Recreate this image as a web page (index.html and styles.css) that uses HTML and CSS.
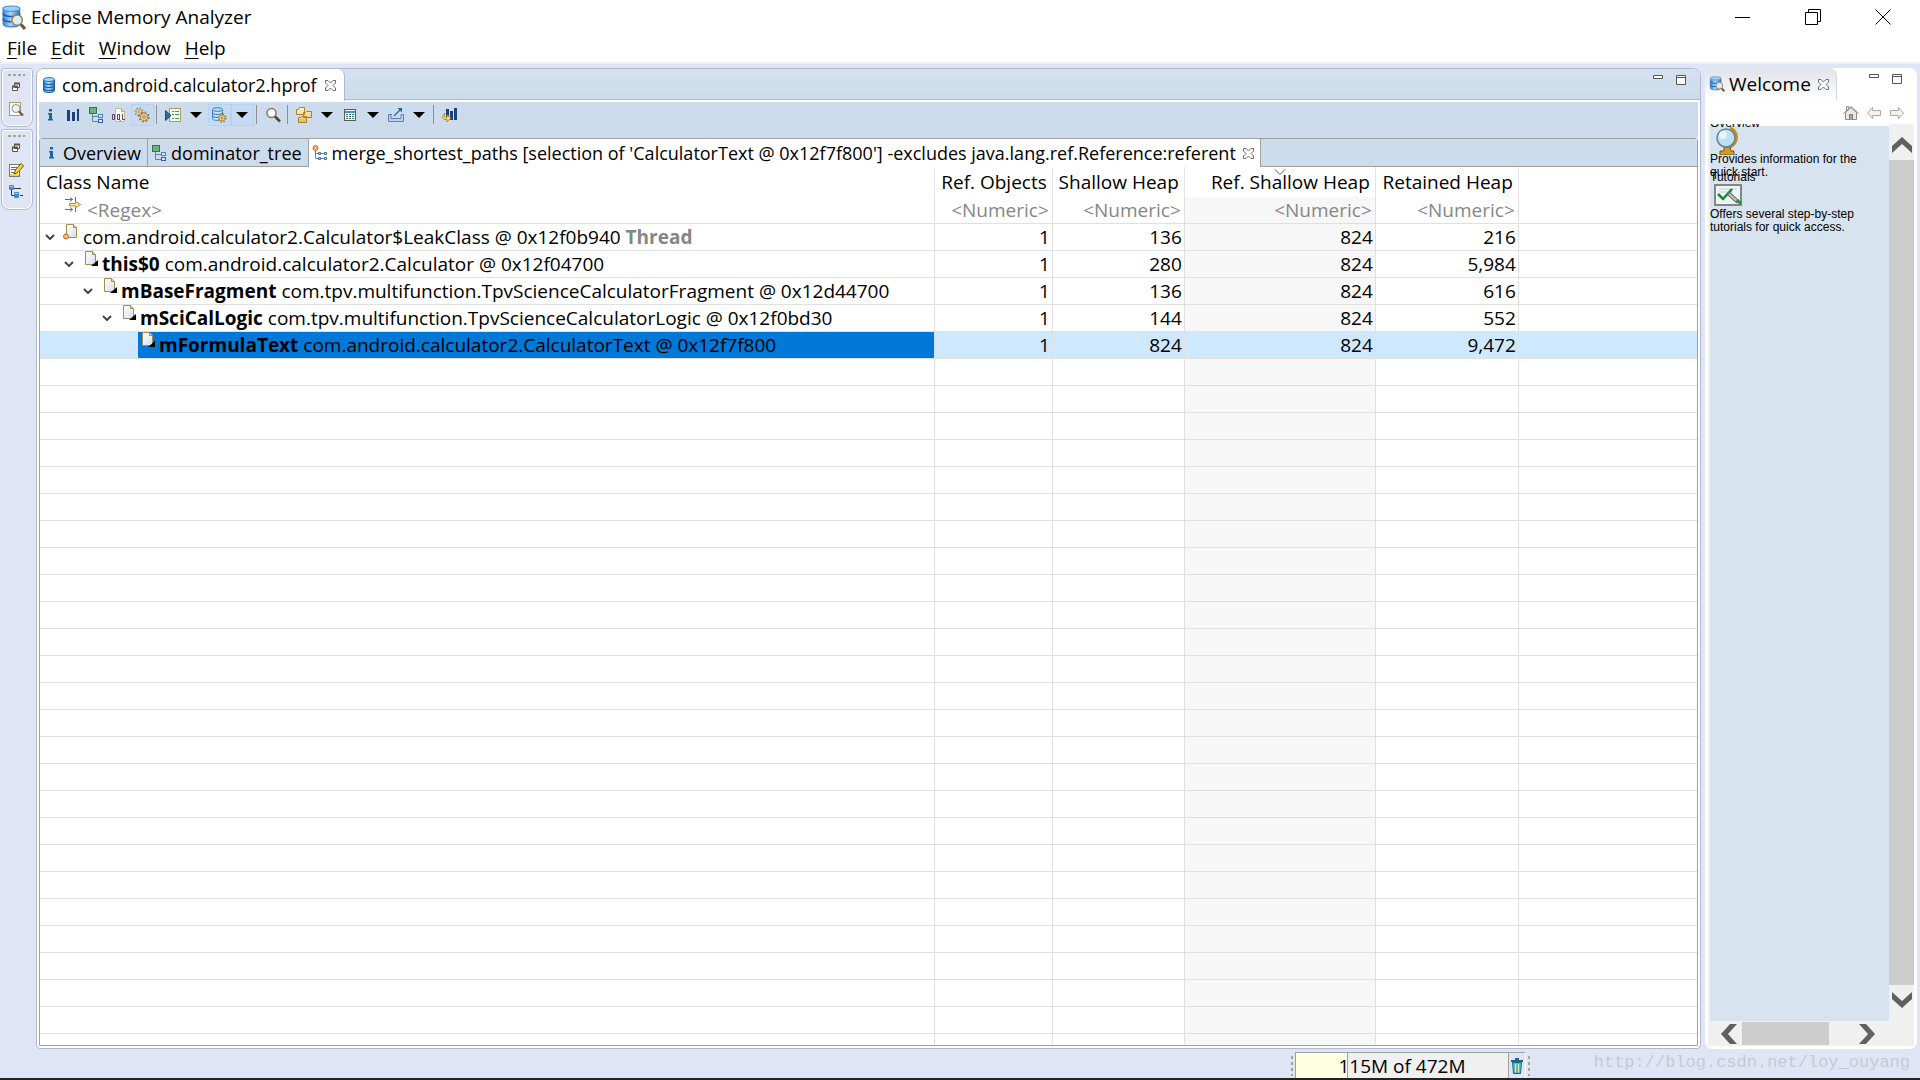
FILE: index.html
```
<!DOCTYPE html>
<html lang="en">
<head>
    <meta charset="UTF-8">
    <meta name="viewport" content="width=device-width, initial-scale=1.0">
    <title>Eclipse Memory Analyzer</title>
    <link rel="stylesheet" href="styles.css">
</head>
<body>
    <!-- Icon definitions -->
    <svg class="defs" aria-hidden="true">
        <defs>
            <linearGradient id="blue" x1="0" x2="1" y1="0" y2="0">
                <stop offset="0" stop-color="#2f86dc"/><stop offset=".45" stop-color="#a8d8f8"/><stop offset="1" stop-color="#2a72c8"/>
            </linearGradient>
            <linearGradient id="page" x1="0" x2="1" y1="0" y2="1">
                <stop offset="0" stop-color="#fff"/><stop offset="1" stop-color="#d3e0f2"/>
            </linearGradient>
            <linearGradient id="gold" x1="0" x2="0" y1="0" y2="1">
                <stop offset="0" stop-color="#fff6cf"/><stop offset="1" stop-color="#e6bd58"/>
            </linearGradient>
        </defs>
        <symbol id="db" viewBox="0 0 16 16">
            <path d="M2.500 2.500v11c0 1.300 2.500 2 5.500 2s5.500-.7 5.500-2v-11z" fill="url(#blue)" stroke="#1b5fae"/>
            <ellipse cx="8" cy="2.500" rx="5.500" ry="2" fill="#a4d6f4" stroke="#2b7cc8"/>
            <path d="M2.500 5.500c0 1.300 2.500 2 5.500 2s5.500-.7 5.500-2M2.500 8.500c0 1.300 2.500 2 5.500 2s5.500-.7 5.500-2M2.500 11.500c0 1.300 2.500 2 5.500 2s5.500-.7 5.500-2" fill="none" stroke="#1551a4"/>
        </symbol>
        <symbol id="mat" viewBox="0 0 24 24">
            <path d="M2 3v15c0 2 3 3 8 3s8-1 8-3V3z" fill="url(#blue)" stroke="#3c78c0"/>
            <ellipse cx="10" cy="3.500" rx="8" ry="2.500" fill="#9bd0f2" stroke="#4a8fce"/>
            <path d="M2 8c0 2 3 3 8 3s8-1 8-3M2 13c0 2 3 3 8 3" fill="none" stroke="#1d5db0" stroke-width="1.500"/>
            <circle cx="15.500" cy="14.500" r="5" fill="#dceefa" stroke="#9c8763" stroke-width="1.500"/>
            <path d="M19 18.500l4 4.500" stroke="#6b5744" stroke-width="3"/>
        </symbol>
        <symbol id="info" viewBox="0 0 16 16">
            <path d="M7 2h3v2.500H7zM6 6h4v6h1v1.500H6V12h1V7.500H6z" fill="#1a66a8"/>
        </symbol>
        <symbol id="bars" viewBox="0 0 16 16">
            <path d="M2 3h3v11H2zM7 5h3v9H7zM12 2h2v12h-2z" fill="#1d4379"/>
        </symbol>
        <symbol id="domtree" viewBox="0 0 16 16">
            <path d="M4.500 7v7.500H10M4.500 9.500H10" fill="none" stroke="#66809c"/>
            <rect x="1.500" y=".5" width="7" height="6" fill="#6cb37c" stroke="#2b7a45"/>
            <rect x="10.500" y="7.500" width="4" height="3" fill="#cfeafc" stroke="#4a7fc0"/>
            <rect x="10.500" y="12.500" width="4" height="3" fill="#cfeafc" stroke="#2c62b0"/>
        </symbol>
        <symbol id="oql" viewBox="0 0 16 16">
            <path d="M4.500 1.500h6l3 3v10h-9z" fill="#fdfaf0" stroke="#c9b98c"/>
            <path d="M10.500 1.500v3h3" fill="#ecd590" stroke="#c9a85c"/>
            <path d="M1.500 7.500h2v5h-2zM6.500 7.500h2v5h-2zM8 12l1.500 2M11.500 7v5.500H14" fill="none" stroke="#5a3f78"/>
        </symbol>
        <symbol id="gear" viewBox="0 0 16 16">
            <circle cx="8" cy="8" r="6" fill="none" stroke="#a87636" stroke-width="3" stroke-dasharray="2.400 2.300"/>
            <circle cx="8" cy="8" r="4.600" fill="#fae3ad" stroke="#bc8840" stroke-width="1.500"/>
            <circle cx="8" cy="8" r="1.800" fill="#fff" stroke="#8b5b23" stroke-width="1.200"/>
        </symbol>
        <symbol id="gears" viewBox="0 0 16 16">
            <use href="#gear" x="0" y="0" width="10" height="10" opacity=".7"/>
            <use href="#gear" x="4" y="4" width="12" height="12"/>
        </symbol>
        <symbol id="query" viewBox="0 0 16 16">
            <rect x="4.500" y="1.500" width="11" height="13" fill="#f4faee" stroke="#ab9a62"/>
            <path d="M7 4.500h2M10 4.500h4M7 7.500h2M10 7.500h4M7 11.500h2M10 11.500h4" stroke="#3f9a5e"/>
            <path d="M.5 3.500L6 8.500l-5.500 5z" fill="#2e7090" stroke="#174c72"/>
        </symbol>
        <symbol id="dbgear" viewBox="0 0 16 16">
            <path d="M1.500 2.500v9c0 1.300 2 2 5 2s5-.7 5-2v-9z" fill="#c4e4f8" stroke="#3f86c8"/>
            <ellipse cx="6.500" cy="2.500" rx="5" ry="2" fill="#a4d4f2" stroke="#3f86c8"/>
            <path d="M1.500 5.500c0 1.300 2 2 5 2s5-.7 5-2M1.500 8.500c0 1.300 2 2 5 2" fill="none" stroke="#2b6cb8"/>
            <use href="#gear" x="6" y="6" width="10" height="10"/>
        </symbol>
        <symbol id="down" viewBox="0 0 12 6"><path d="M0 0h12L6 6z"/></symbol>
        <symbol id="search" viewBox="0 0 16 16">
            <circle cx="6.500" cy="6" r="4.500" fill="#f8fcff" stroke="#8a765d" stroke-width="1.500"/>
            <path d="M10 9.500l5 5" stroke="#55402e" stroke-width="2.500"/>
        </symbol>
        <symbol id="groups" viewBox="0 0 16 16">
            <path d="M.5 2.500h2l1-2h5v7h-8zM7.500 5.500h2l1-1h5v6h-8zM2.500 10.500h2l1-1h5v6h-8z" fill="url(#gold)" stroke="#ad8124"/>
        </symbol>
        <symbol id="calc" viewBox="0 0 16 16">
            <rect x="2.500" y="2.500" width="11" height="11" fill="#f7f7ee" stroke="#5d5b4a"/>
            <path d="M3 4h10v2H3z" fill="#4d92b0"/>
            <path d="M4 7.500h8M4 9.500h8M4 11.500h8" stroke="#2b7191" stroke-dasharray="2 1"/>
        </symbol>
        <symbol id="export" viewBox="0 0 16 16">
            <path d="M4 7.500H.5v7h15v-7H13v4H3V7.500" fill="#bdd0ef" stroke="#5f7fb9"/>
            <path d="M6 9l6-6" stroke="#2d6ba4" stroke-width="1.300"/>
            <path d="M9.500 1H14v4.500z" fill="#1f6399"/>
        </symbol>
        <symbol id="compare" viewBox="0 0 16 16">
            <path d="M4 2h3v8H4zM8 4h3v9H8zM12 1h3v12h-3z" fill="#1d4379"/>
            <path d="M3 6C.5 7.500 0 11 2 12.500h3V15l4-4-4-3v2.500H3.500C2 9.500 2.500 7.500 3 6z" fill="#f8d868" stroke="#b17b18" stroke-width=".8"/>
        </symbol>
        <symbol id="paths" viewBox="0 0 16 16">
            <path d="M3.500 6v7.500H14M3.500 8.500H14" fill="none" stroke="#5a7cb8"/>
            <circle cx="3.500" cy="3" r="2.500" fill="#f9b872" stroke="#c96a1c"/>
            <path d="M6.500 7.500h2v2h-2zM12.500 7.500h2v2h-2zM6.500 12.500h2v2h-2zM12.500 12.500h2v2h-2z" fill="#dbe8fb" stroke="#4468ae"/>
        </symbol>
        <symbol id="close" viewBox="0 0 11 11">
            <path d="M.5.5h2.500l2.500 2.500L8 .5h2.500V3L8 5.500 10.500 8v2.500H8L5.500 8 3 10.500H.5V8L3 5.500.5 3z" fill="#fff" stroke="#6a6a6a"/>
        </symbol>
        <symbol id="minimize" viewBox="0 0 10 10"><path d="M.5.500h9v3h-9z" fill="#fff" stroke="#555"/></symbol>
        <symbol id="maximize" viewBox="0 0 10 10"><path d="M.5.500h9v9h-9zM.5 2.500h9" fill="#fff" stroke="#555"/></symbol>
        <symbol id="restore" viewBox="0 0 10 10">
            <path d="M3.500 1.500h5v4h-5zM1.500 4.500h5v4h-5z" fill="#fff" stroke="#5d5348"/>
            <path d="M3 1.500h6M1 4.500h6" stroke="#5d5348" stroke-width="2"/>
        </symbol>
        <symbol id="inspect" viewBox="0 0 16 16">
            <rect x="1.500" y="1.500" width="11" height="13" fill="#fbfcf6" stroke="#a89c72"/>
            <circle cx="8" cy="7.500" r="4" fill="#eaf3fb" stroke="#8d8d85"/>
            <path d="M11 10.500l4 4" stroke="#6d5038" stroke-width="2"/>
        </symbol>
        <symbol id="notes" viewBox="0 0 16 16">
            <rect x="1.500" y="2.500" width="10" height="12" fill="#fff" stroke="#777"/>
            <path d="M3 5.500h6M3 7.500h5M3 10.500h3" stroke="#4778a4"/>
            <path d="M2 12h9v2H2z" fill="#f4d72c"/>
            <path d="M6 12l1.500-4L13 1.500 15.500 4 10 10.500z" fill="#f7d916" stroke="#3b3510" stroke-width=".8"/>
        </symbol>
        <symbol id="nav" viewBox="0 0 16 16">
            <path d="M6 4.500h7M3.500 5v6.500H6M12 11.500h3" fill="none" stroke="#333"/>
            <rect x="1" y="1" width="5" height="5" rx="1" fill="#3a8ad8"/>
            <rect x="6" y="8" width="5" height="6" rx="1" fill="#3a8ad8"/>
            <path d="M2 2.500h3M7 9.500h3" stroke="#a9d4f6"/>
        </symbol>
        <symbol id="filter" viewBox="0 0 16 16">
            <path d="M0 2.500h8M0 12.500h8M5 .5l2.500 2L5 4.500M5 10.500l2.500 2-2.500 2M10.500 0v5M10.500 10v5" fill="none" stroke="#57728f"/>
            <path d="M4.500 6.500h6v-2l5 3-5 3.500V9h-6z" fill="#fbe3a0" stroke="#c48a26"/>
        </symbol>
        <symbol id="object" viewBox="0 0 16 16">
            <path d="M3.500.500h7l3 3v10h-10z" fill="url(#page)" stroke="#a58b47"/>
            <path d="M10.500.500v3h3" fill="#ecd08a" stroke="#a58b47"/>
        </symbol>
        <symbol id="thread" viewBox="0 0 16 16">
            <use href="#object"/>
            <circle cx="3" cy="12.500" r="2.500" fill="#fbbd7c" stroke="#c4621b"/>
        </symbol>
        <symbol id="ref" viewBox="0 0 16 16">
            <use href="#object"/>
            <path d="M16 9v6H9z"/>
        </symbol>
        <symbol id="expand" viewBox="0 0 10 6"><path d="M1 1l4 4 4-4" fill="none" stroke="#444" stroke-width="2"/></symbol>
        <symbol id="home" viewBox="0 0 16 16">
            <path d="M2.500 7.500v7h11v-7L8 2.500z" fill="#e8e8e4" stroke="#8c8c8c"/>
            <path d="M.5 8.500L8 1.500l7.500 7M3.500 5V1.500h2v2" fill="none" stroke="#8c8c8c"/>
            <path d="M6.500 14.500v-5h3v5" fill="#aaa" stroke="#777"/>
        </symbol>
        <symbol id="back" viewBox="0 0 16 16"><path d="M1.500 8l5-5.500v3h8v5h-8v3z" fill="#f4f3ea" stroke="#aaa"/></symbol>
        <symbol id="forward" viewBox="0 0 16 16"><path d="M14.500 8l-5-5.500v3h-8v5h8v3z" fill="#f4f3ea" stroke="#aaa"/></symbol>
        <symbol id="trash" viewBox="0 0 12 16">
            <path d="M1.500 4.500h9l-1 11h-7z" fill="#67b8b4" stroke="#166a8f"/>
            <path d="M0 3h12M4 1h4" stroke="#176a94" stroke-width="2"/>
            <path d="M4.500 6v8M7.500 6v8" stroke="#d3ed9c"/>
        </symbol>
        <symbol id="arrow" viewBox="0 0 20 16"><path d="M0 16V9L10 0l10 9v7L10 7z" fill="#606060"/></symbol>
    </svg>

    <header class="titlebar">
        <svg class="app-icon"><use href="#mat"/></svg>
        <span class="title">Eclipse Memory Analyzer</span>
        <div class="window-buttons">
            <button type="button" aria-label="Minimize"><svg viewBox="0 0 16 16"><path d="M0 8.500h15"/></svg></button>
            <button type="button" aria-label="Restore"><svg viewBox="0 0 16 16"><path d="M.5 3.500h12v12H.5zM3.500 3.500v-3h12v12h-3"/></svg></button>
            <button type="button" aria-label="Close"><svg viewBox="0 0 16 16"><path d="M.5.500l15 15M15.500.500l-15 15"/></svg></button>
        </div>
    </header>

    <nav class="menubar">
        <a href="#"><u>F</u>ile</a>
        <a href="#"><u>E</u>dit</a>
        <a href="#"><u>W</u>indow</a>
        <a href="#"><u>H</u>elp</a>
    </nav>

    <div class="workbench">
        <!-- Minimized view stacks -->
        <aside class="trim">
            <div class="trim-stack">
                <span class="grip"></span>
                <button type="button" aria-label="Restore inspector"><svg class="small"><use href="#restore"/></svg></button>
                <button type="button" aria-label="Inspector"><svg class="icon"><use href="#inspect"/></svg></button>
            </div>
            <div class="trim-stack">
                <span class="grip"></span>
                <button type="button" aria-label="Restore notes"><svg class="small"><use href="#restore"/></svg></button>
                <button type="button" aria-label="Notes"><svg class="icon"><use href="#notes"/></svg></button>
                <button type="button" aria-label="Navigation history"><svg class="icon"><use href="#nav"/></svg></button>
            </div>
        </aside>

        <!-- Heap editor -->
        <main class="editor">
            <div class="editor-tabs">
                <div class="editor-tab">
                    <svg class="icon"><use href="#db"/></svg>
                    <span>com.android.calculator2.hprof</span>
                    <button type="button" aria-label="Close editor"><svg class="close"><use href="#close"/></svg></button>
                </div>
                <div class="part-buttons">
                    <button type="button" aria-label="Minimize editor"><svg class="small"><use href="#minimize"/></svg></button>
                    <button type="button" aria-label="Maximize editor"><svg class="small"><use href="#maximize"/></svg></button>
                </div>
            </div>

            <div class="toolbar">
                <button type="button" aria-label="Overview"><svg class="icon"><use href="#info"/></svg></button>
                <button type="button" aria-label="Histogram"><svg class="icon"><use href="#bars"/></svg></button>
                <button type="button" aria-label="Dominator tree"><svg class="icon"><use href="#domtree"/></svg></button>
                <button type="button" aria-label="OQL"><svg class="icon"><use href="#oql"/></svg></button>
                <button type="button" class="hot" aria-label="Threads"><svg class="icon"><use href="#gears"/></svg></button>
                <span class="separator"></span>
                <button type="button" aria-label="Run report"><svg class="icon"><use href="#query"/></svg></button>
                <button type="button" aria-label="Report list"><svg class="drop"><use href="#down"/></svg></button>
                <button type="button" class="hot" aria-label="Query browser"><svg class="icon"><use href="#dbgear"/></svg></button>
                <button type="button" class="hot" aria-label="Query list"><svg class="drop"><use href="#down"/></svg></button>
                <span class="separator"></span>
                <button type="button" aria-label="Find object"><svg class="icon"><use href="#search"/></svg></button>
                <span class="separator"></span>
                <button type="button" aria-label="Group result"><svg class="icon"><use href="#groups"/></svg></button>
                <button type="button" aria-label="Group list"><svg class="drop"><use href="#down"/></svg></button>
                <button type="button" aria-label="Calculate retained size"><svg class="icon"><use href="#calc"/></svg></button>
                <button type="button" aria-label="Calculate list"><svg class="drop"><use href="#down"/></svg></button>
                <button type="button" aria-label="Export"><svg class="icon"><use href="#export"/></svg></button>
                <button type="button" aria-label="Export list"><svg class="drop"><use href="#down"/></svg></button>
                <span class="separator"></span>
                <button type="button" aria-label="Compare"><svg class="icon"><use href="#compare"/></svg></button>
            </div>

            <div class="pane">
                <div class="pane-tabs">
                    <a href="#" class="pane-tab"><svg class="icon"><use href="#info"/></svg>Overview</a>
                    <a href="#" class="pane-tab"><svg class="icon"><use href="#domtree"/></svg>dominator_tree</a>
                    <div class="pane-tab active">
                        <svg class="icon"><use href="#paths"/></svg>
                        <span>merge_shortest_paths [selection of 'CalculatorText @ 0x12f7f800'] -excludes java.lang.ref.Reference:referent</span>
                        <button type="button" aria-label="Close tab"><svg class="close"><use href="#close"/></svg></button>
                    </div>
                    <div class="pane-rest"></div>
                </div>

                <div class="table-area">
                    <table class="heap">
                        <colgroup>
                            <col class="col-name">
                            <col class="col-objects">
                            <col class="col-shallow">
                            <col class="col-ref-shallow">
                            <col class="col-retained">
                            <col>
                        </colgroup>
                        <thead>
                            <tr>
                                <th>Class Name</th>
                                <th>Ref. Objects</th>
                                <th>Shallow Heap</th>
                                <th class="sort-head">Ref. Shallow Heap<svg class="sort-mark" viewBox="0 0 12 6"><path d="M1 .5l5 5 5-5" fill="none" stroke="#555"/></svg></th>
                                <th>Retained Heap</th>
                                <th></th>
                            </tr>
                        </thead>
                        <tbody>
                            <tr class="filter-row">
                                <td><div class="filter"><svg class="icon"><use href="#filter"/></svg>&lt;Regex&gt;</div></td>
                                <td>&lt;Numeric&gt;</td>
                                <td>&lt;Numeric&gt;</td>
                                <td class="sorted">&lt;Numeric&gt;</td>
                                <td>&lt;Numeric&gt;</td>
                                <td></td>
                            </tr>
                            <tr>
                                <td><div class="node"><svg class="expand"><use href="#expand"/></svg><div class="label"><svg class="icon"><use href="#thread"/></svg><span>com.android.calculator2.Calculator$LeakClass @ 0x12f0b940 <b class="kind">Thread</b></span></div></div></td>
                                <td>1</td><td>136</td><td class="sorted">824</td><td>216</td><td></td>
                            </tr>
                            <tr>
                                <td><div class="node level-1"><svg class="expand"><use href="#expand"/></svg><div class="label"><svg class="icon"><use href="#ref"/></svg><span><b>this$0</b> com.android.calculator2.Calculator @ 0x12f04700</span></div></div></td>
                                <td>1</td><td>280</td><td class="sorted">824</td><td>5,984</td><td></td>
                            </tr>
                            <tr>
                                <td><div class="node level-2"><svg class="expand"><use href="#expand"/></svg><div class="label"><svg class="icon"><use href="#ref"/></svg><span><b>mBaseFragment</b> com.tpv.multifunction.TpvScienceCalculatorFragment @ 0x12d44700</span></div></div></td>
                                <td>1</td><td>136</td><td class="sorted">824</td><td>616</td><td></td>
                            </tr>
                            <tr>
                                <td><div class="node level-3"><svg class="expand"><use href="#expand"/></svg><div class="label"><svg class="icon"><use href="#ref"/></svg><span><b>mSciCalLogic</b> com.tpv.multifunction.TpvScienceCalculatorLogic @ 0x12f0bd30</span></div></div></td>
                                <td>1</td><td>144</td><td class="sorted">824</td><td>552</td><td></td>
                            </tr>
                            <tr class="selected">
                                <td><div class="node level-4"><span class="expand"></span><div class="label"><svg class="icon"><use href="#ref"/></svg><span><b>mFormulaText</b> com.android.calculator2.CalculatorText @ 0x12f7f800</span></div></div></td>
                                <td>1</td><td>824</td><td class="sorted">824</td><td>9,472</td><td></td>
                            </tr>
                            <!-- Empty grid below the results -->
                            <tr class="blank"><td></td><td></td><td></td><td class="sorted"></td><td></td><td></td></tr>
                        </tbody>
                    </table>
                </div>
            </div>
        </main>

        <!-- Welcome view -->
        <section class="welcome">
            <div class="welcome-tabs">
                <div class="welcome-tab">
                    <svg class="icon"><use href="#mat"/></svg>
                    <span>Welcome</span>
                    <button type="button" aria-label="Close welcome"><svg class="close"><use href="#close"/></svg></button>
                </div>
                <div class="part-buttons">
                    <button type="button" aria-label="Minimize welcome"><svg class="small"><use href="#minimize"/></svg></button>
                    <button type="button" aria-label="Maximize welcome"><svg class="small"><use href="#maximize"/></svg></button>
                </div>
            </div>
            <div class="welcome-tools">
                <button type="button" aria-label="Home"><svg class="icon"><use href="#home"/></svg></button>
                <button type="button" aria-label="Back"><svg class="icon"><use href="#back"/></svg></button>
                <button type="button" aria-label="Forward"><svg class="icon"><use href="#forward"/></svg></button>
            </div>
            <div class="browser">
                <div class="intro">
                    <a href="#" class="intro-link first">Overview</a>
                    <svg class="globe" viewBox="0 0 22 28">
                        <path d="M14 1c9 4 9 17-3 20" fill="none" stroke="#c68a1d" stroke-width="3"/>
                        <path d="M8 20h6l1 4h3v4H4v-4h4z" fill="#d49a2c" stroke="#7d5416"/>
                        <circle cx="10" cy="11" r="9" fill="#bfdff5" stroke="#64839d" stroke-width="1.500"/>
                        <circle cx="7" cy="8" r="4" fill="#eaf6fd"/>
                    </svg>
                    <p>Provides information for the quick start.</p>
                    <a href="#" class="intro-link second">Tutorials</a>
                    <svg class="board" viewBox="0 0 28 22">
                        <rect x="1" y="1" width="26" height="20" fill="#edf6f6" stroke="#858585" stroke-width="2"/>
                        <path d="M5 5h18M5 8h14" stroke="#bcd4dc"/>
                        <path d="M4 10l5 5 9-10" fill="none" stroke="#168a2c" stroke-width="2.500"/>
                        <path d="M14 9l10 9" stroke="#666" stroke-width="4"/>
                        <path d="M15 10l8 7" stroke="#c8c8c8" stroke-width="2"/>
                        <path d="M23 16l4 4" stroke="#2f8a45" stroke-width="3"/>
                    </svg>
                    <p>Offers several step-by-step tutorials for quick access.</p>
                </div>
                <div class="scroll-y">
                    <button type="button" aria-label="Scroll up"><svg class="arrow"><use href="#arrow"/></svg></button>
                    <span class="thumb"></span>
                    <button type="button" aria-label="Scroll down"><svg class="arrow flip"><use href="#arrow"/></svg></button>
                </div>
                <div class="scroll-x">
                    <button type="button" aria-label="Scroll left"><svg class="arrow left"><use href="#arrow"/></svg></button>
                    <span class="thumb"></span>
                    <button type="button" aria-label="Scroll right"><svg class="arrow right"><use href="#arrow"/></svg></button>
                </div>
            </div>
        </section>
    </div>

    <footer class="statusbar">
        <span class="dots"></span>
        <div class="heap-status">
            <div class="heap-used" style="width: 24.4%"></div>
            <span>115M of 472M</span>
        </div>
        <button type="button" class="gc" aria-label="Run garbage collector"><svg viewBox="0 0 12 16"><use href="#trash"/></svg></button>
        <span class="dots"></span>
        <span class="watermark">http://blog.csdn.net/loy_ouyang</span>
    </footer>
    <div class="taskbar"></div>
</body>
</html>
```
FILE: styles.css
```
* {
    box-sizing: border-box;
}
body {
    font-family: 'Segoe UI', 'Open Sans', sans-serif;
    font-size: 19px;
    line-height: 26px;
    margin: 0;
    height: 100vh;
    display: flex;
    flex-direction: column;
    background: #e0e5f6;
    color: #000;
    overflow: hidden;
}
.defs {
    position: absolute;
    width: 0;
    height: 0;
}
button {
    display: flex;
    align-items: center;
    justify-content: center;
    padding: 0;
    border: none;
    background: none;
    flex: none;
}
a {
    color: inherit;
    text-decoration: none;
}
svg {
    display: block;
    flex: none;
}
.icon {
    width: 16px;
    height: 16px;
}
.small {
    width: 10px;
    height: 10px;
}
.close {
    width: 11px;
    height: 11px;
}

/* Title and menu */
.titlebar {
    display: flex;
    align-items: center;
    height: 34px;
    padding-left: 1px;
    background: #fff;
}
.app-icon {
    width: 25px;
    height: 25px;
    margin-right: 5px;
}
.window-buttons {
    display: flex;
    margin-left: auto;
    padding-right: 2px;
}
.window-buttons button {
    width: 70px;
    height: 34px;
}
.window-buttons svg {
    width: 16px;
    height: 16px;
    fill: none;
    stroke: #000;
}
.menubar {
    display: flex;
    gap: 14px;
    height: 30px;
    padding: 1px 7px;
    background: #fff;
    border-bottom: 2px solid #f0f0f0;
}
.menubar u {
    text-underline-offset: 3px;
    text-decoration-thickness: 1px;
}

.workbench {
    flex: 1;
    min-height: 0;
    display: flex;
    padding: 4px 3px 0 1px;
}

/* Left trim */
.trim {
    width: 35px;
    display: flex;
    flex-direction: column;
    gap: 2px;
    padding-right: 3px;
}
.trim-stack {
    display: flex;
    flex-direction: column;
    align-items: center;
    border: 1px solid #b4bad0;
    border-radius: 3px 3px 8px 8px;
    box-shadow: inset 0 0 0 1px #fff;
    padding: 5px 1px 6px 0;
}
.trim-stack button {
    width: 23px;
    height: 22px;
    padding-right: 1px;
}
.grip {
    width: 17px;
    height: 2px;
    background: repeating-linear-gradient(90deg, #a9a496 0 3px, transparent 3px 5px);
}

/* Editor */
.editor {
    flex: 1;
    min-width: 0;
    display: flex;
    flex-direction: column;
    border: 1px solid #b0b8d0;
    border-radius: 8px 8px 4px 4px;
    background: #fff;
    padding: 0 2px 2px;
}
.editor-tabs {
    display: flex;
    justify-content: space-between;
    height: 31px;
    margin: 0 -2px 2px;
    border-bottom: 1px solid #b0b8d0;
    border-radius: 7px 7px 0 0;
    background: linear-gradient(#d3e1f0, #cddcec);
    font-size: 18px;
}
.editor-tab {
    display: flex;
    align-items: center;
    gap: 5px;
    height: 32px;
    padding: 0 8px 0 4px;
    background: #fff;
    border-right: 1px solid #b0b8d0;
    border-radius: 7px 7px 0 0;
}
.editor-tab button, .pane-tab button, .welcome-tab button {
    margin-left: 3px;
}
.part-buttons {
    display: flex;
    gap: 13px;
    height: 10px;
    margin: 6px 14px 0 0;
}
.toolbar {
    display: flex;
    height: 36px;
    padding: 2px 0 12px;
    background: #cddcec;
}
.toolbar button {
    width: 23px;
    padding-right: 1px;
}
.toolbar .hot {
    background: #c5dbf3;
    box-shadow: inset 0 0 0 1px #b4d3f3;
}
.separator {
    width: 8px;
    border-left: 1px solid #8a8f94;
    margin: 1px -2px 2px 2px;
}
.drop {
    width: 12px;
    height: 6px;
}
.pane {
    flex: 1;
    min-height: 0;
    display: flex;
    flex-direction: column;
    border: 1px solid #a0a0a0;
    border-radius: 3px 3px 0 0;
    background: #fff;
}
.pane-tabs {
    display: flex;
    height: 28px;
    font-size: 18px;
}
.pane-tab {
    display: flex;
    align-items: center;
    gap: 4px;
    padding: 0 6px 0 3px;
    background: #cddcec;
    border-right: 1px solid #a0a0a0;
    border-bottom: 1px solid #a0a0a0;
    white-space: nowrap;
}
.pane-tab.active {
    background: #fff;
    border-bottom: none;
}
.pane-rest {
    flex: 1;
    background: #cddcec;
    border-bottom: 1px solid #a0a0a0;
}

/* Result table */
.table-area {
    flex: 1;
    min-height: 0;
    overflow: hidden;
}
.heap {
    width: 100%;
    height: 100%;
    table-layout: fixed;
    border-collapse: separate;
    border-spacing: 0;
}
.col-name {
    width: 54%;
}
.col-objects {
    width: 118px;
}
.col-shallow {
    width: 132px;
}
.col-ref-shallow {
    width: 191px;
}
.col-retained {
    width: 143px;
}
.heap th {
    height: 30px;
    padding: 0 5px;
    font-weight: normal;
    text-align: right;
    white-space: nowrap;
    border-right: 1px solid #e4e4e4;
}
.heap th:first-child {
    padding-left: 6px;
    text-align: left;
}
.heap td {
    height: 27px;
    padding: 0 2px;
    text-align: right;
    white-space: nowrap;
    border-right: 1px solid #e0e0e0;
    border-bottom: 1px solid #e0e0e0;
}
.heap td:first-child {
    padding: 0;
    text-align: left;
}
.heap th:last-child, .heap td:last-child {
    border-right: none;
}
.heap .sorted {
    background: #f7f7f7;
}
.heap .sort-head {
    position: relative;
}
.sort-mark {
    position: absolute;
    top: 2px;
    left: 47%;
    width: 12px;
    height: 6px;
}
.heap .filter-row td {
    padding-right: 3px;
    color: #868686;
}
.filter {
    display: flex;
    gap: 6px;
    padding-left: 25px;
}
.node {
    display: flex;
    align-items: center;
    height: 26px;
    padding-left: 5px;
}
.level-1 {
    padding-left: 24px;
}
.level-2 {
    padding-left: 43px;
}
.level-3 {
    padding-left: 62px;
}
.level-4 {
    padding-left: 81px;
}
.expand {
    width: 10px;
    height: 6px;
    margin-right: 7px;
}
.label {
    flex: 1;
    display: flex;
    gap: 4px;
    height: 26px;
    padding-left: 1px;
}
.kind {
    color: #868686;
}
.heap .selected td {
    background: #cde8ff;
}
.selected .label {
    background: #0078d7;
}
.heap .blank td {
    height: 100%;
    border-bottom: none;
    background-image: repeating-linear-gradient(transparent 0 26px, #e0e0e0 26px 27px);
}

/* Welcome view */
.welcome {
    width: 212px;
    margin-left: 4px;
    display: flex;
    flex-direction: column;
    background: #fff;
    border-radius: 8px;
    padding: 0 3px 3px;
}
.welcome-tabs {
    display: flex;
    justify-content: space-between;
    height: 32px;
    margin: 0 -3px;
}
.welcome-tab {
    display: flex;
    align-items: center;
    gap: 4px;
    padding: 0 7px 0 4px;
    border-right: 1px solid #d4d6de;
    border-radius: 8px 8px 0 0;
    background: linear-gradient(#e0e2ea, #fff);
}
.welcome-tabs .part-buttons {
    margin-right: 15px;
}
.welcome-tools {
    display: flex;
    justify-content: flex-end;
    align-items: center;
    gap: 7px;
    height: 24px;
    padding: 2px 9px 0 0;
}
.browser {
    flex: 1;
    min-height: 0;
    display: grid;
    grid-template: minmax(0, 1fr) 25px / minmax(0, 1fr) 25px;
    background: #f0f0f0;
}
.intro {
    margin-left: 2px;
    background: linear-gradient(#fff 2px, #d7e4ef 2px);
    font: 12px/13px 'Liberation Sans', Arial, sans-serif;
    overflow: hidden;
}
.intro p {
    margin: 0;
    padding-right: 16px;
}
.intro-link {
    display: block;
}
.intro-link.first {
    margin-top: -7px;
}
.intro-link.second {
    margin-top: -8px;
}
.globe {
    width: 22px;
    height: 28px;
    margin: -3px 0 -2px 6px;
}
.board {
    width: 28px;
    height: 22px;
    margin: 0 0 2px 4px;
}
.scroll-y {
    display: flex;
    flex-direction: column;
}
.scroll-y button {
    height: 36px;
    padding-top: 6px;
}
.scroll-y button:last-child {
    padding: 0 0 6px;
}
.thumb {
    flex: 1;
    background: #cdcdcd;
}
.scroll-x {
    display: flex;
    padding-right: 5px;
}
.scroll-x button {
    width: 34px;
}
.scroll-x button:first-child {
    padding-left: 8px;
}
.scroll-x .thumb {
    flex: none;
    width: 87px;
    margin: 1px 21px 1px 0;
}
.arrow {
    width: 20px;
    height: 16px;
}
.flip {
    transform: rotate(180deg);
}
.left {
    transform: rotate(-90deg);
}
.right {
    transform: rotate(90deg);
}

/* Status bar */
.statusbar {
    display: flex;
    justify-content: flex-end;
    height: 29px;
    padding: 3px 10px 0 0;
}
.dots {
    width: 2px;
    margin: 4px 2px 2px;
    background: repeating-linear-gradient(#a9a496 0 3px, transparent 3px 6px);
}
.heap-status {
    position: relative;
    width: 214px;
    border: 1px solid #a0a0a0;
    border-bottom: none;
    background: #f0f0f0;
    text-align: center;
}
.heap-status span {
    position: relative;
}
.heap-used {
    position: absolute;
    top: 0;
    bottom: 0;
    left: 0;
    background: #ffffe1;
    border-right: 1px solid #a0a0a0;
}
.gc {
    width: 17px;
    border-top: 1px solid #a0a0a0;
    border-right: 1px solid #fff;
}
.gc svg {
    width: 12px;
    height: 16px;
}
.watermark {
    width: 378px;
    font: 17px/22px 'Liberation Mono', monospace;
    text-align: right;
    color: #c6c9d4;
}
.taskbar {
    height: 2px;
    background: #222;
}
```
